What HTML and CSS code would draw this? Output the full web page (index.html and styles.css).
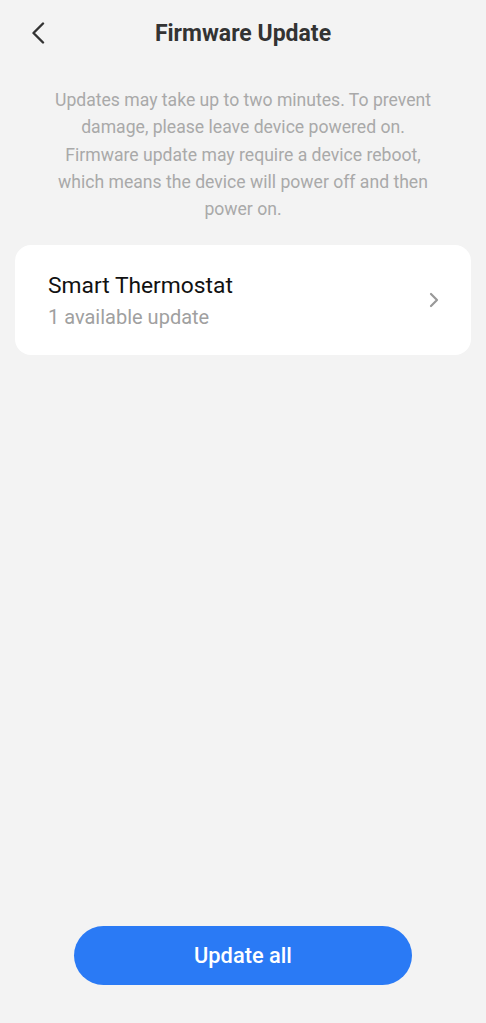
FILE: index.html
```html
<!DOCTYPE html>
<html lang="en">
<head>
    <meta charset="UTF-8">
    <meta name="viewport" content="width=device-width, initial-scale=1.0">
    <title>Firmware Update</title>
    <link rel="stylesheet" href="styles.css">
</head>
<body>
    <div class="screen">
        <!-- Header -->
        <div class="header">
            <button class="back-btn" aria-label="Back">
                <svg width="14" height="22" viewBox="0 0 14 22">
                    <path d="M12 1.5 L2.5 11 L12 20.5" fill="none" stroke="#333" stroke-width="2.4" stroke-linecap="round" stroke-linejoin="round"/>
                </svg>
            </button>
            <h1>Firmware Update</h1>
        </div>

        <p class="notice">Updates may take up to two minutes. To prevent damage, please leave device powered on. Firmware update may require a device reboot, which means the device will power off and then power on.</p>

        <!-- Device list -->
        <div class="device-card">
            <div class="device-info">
                <div class="device-name">Smart Thermostat</div>
                <div class="device-sub">1 available update</div>
            </div>
            <svg class="chevron" width="10" height="16" viewBox="0 0 10 16">
                <path d="M2 2 L8 8 L2 14" fill="none" stroke="#999" stroke-width="2.2" stroke-linecap="round" stroke-linejoin="round"/>
            </svg>
        </div>

        <div class="spacer"></div>

        <div class="footer">
            <button class="update-btn">Update all</button>
        </div>
    </div>
</body>
</html>
```

FILE: styles.css
```css
body {
    font-family: Roboto, "Noto Sans", Arial, sans-serif;
    background-color: #f3f3f3;
    margin: 0;
    padding: 0;
}

.screen {
    display: flex;
    flex-direction: column;
    height: 1023px;
}

.header {
    display: flex;
    align-items: center;
    justify-content: center;
    height: 66px;
    position: relative;
}

.header h1 {
    margin: 0;
    font-size: 23px;
    font-weight: 700;
    color: #333;
}

.back-btn {
    position: absolute;
    left: 31px;
    top: 22px;
    background: none;
    border: none;
    padding: 0;
    cursor: pointer;
    display: flex;
}

.notice {
    margin: 21px 50px 0;
    font-size: 17.6px;
    line-height: 27.3px;
    color: #a9a9a9;
    text-align: center;
}

.device-card {
    margin: 22px 15px 0;
    background-color: white;
    border-radius: 16px;
    height: 110px;
    padding: 0 32px 0 33px;
    box-sizing: border-box;
    display: flex;
    align-items: center;
    justify-content: space-between;
}

.device-name {
    font-size: 22.8px;
    color: #111;
}

.device-sub {
    margin-top: 6px;
    font-size: 20px;
    color: #a0a0a0;
}

.spacer {
    flex: 1;
}

.footer {
    display: flex;
    justify-content: center;
    padding-bottom: 38px;
}

.update-btn {
    width: 338px;
    height: 59px;
    border: none;
    border-radius: 30px;
    background-color: #2a7af5;
    color: white;
    font-family: Roboto, "Noto Sans", Arial, sans-serif;
    font-size: 21.8px;
    font-weight: 500;
    cursor: pointer;
}
```
